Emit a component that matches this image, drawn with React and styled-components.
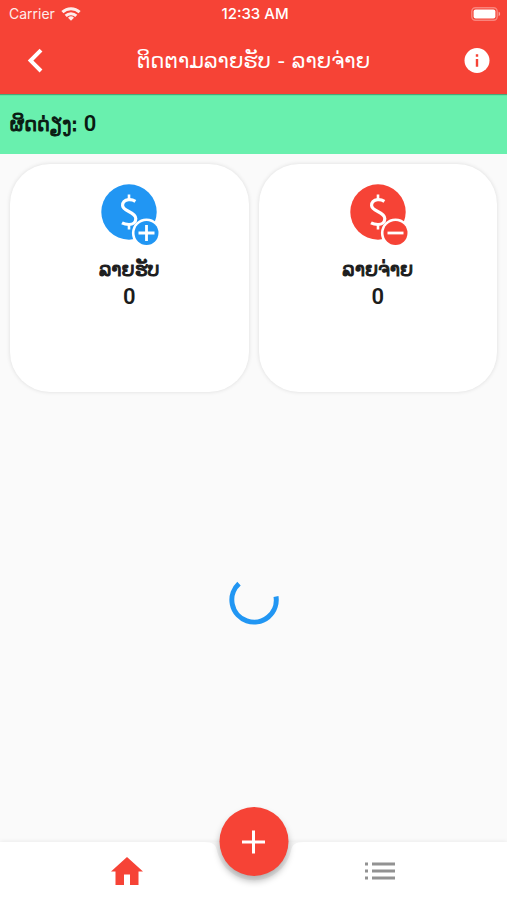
import React from 'react';
import styled, { createGlobalStyle } from 'styled-components';

const RED = '#f64336';
const BLUE = '#2196f3';

const cards = [
  { id: 'income', label: 'ລາຍຮັບ', amount: 0, color: BLUE, sign: 'plus' },
  { id: 'expense', label: 'ລາຍຈ່າຍ', amount: 0, color: RED, sign: 'minus' },
];

const WifiIcon = () => (
  <svg width="20" height="14" viewBox="0 0 20 14" aria-hidden="true">
    <g fill="none" stroke="#fff" strokeWidth="3">
      <path d="M1.4 5.2a12.4 12.4 0 0 1 17.2 0" />
      <path d="M4.7 8.8a7.6 7.6 0 0 1 10.6 0" />
    </g>
    <path fill="#fff" d="M10 13.8 7 10.8a4.3 4.3 0 0 1 6 0z" />
  </svg>
);

const BatteryIcon = () => (
  <svg width="30" height="14" viewBox="0 0 30 14" aria-hidden="true">
    <rect x="0.8" y="0.8" width="25.4" height="12.4" rx="3.6" fill="none" stroke="#fff" strokeOpacity="0.35" strokeWidth="1.4" />
    <rect x="2.6" y="2.6" width="21.8" height="8.8" rx="2" fill="#fff" />
    <path d="M27.6 4.8c2 .6 2 3.8 0 4.4z" fill="#fff" fillOpacity="0.5" />
  </svg>
);

const BackIcon = () => (
  <svg width="16" height="26" viewBox="0 0 16 26" aria-hidden="true">
    <path d="M14 2.2 3.6 12.6 14 23" fill="none" stroke="#fff" strokeWidth="4" />
  </svg>
);

const InfoIcon = () => (
  <svg width="26" height="26" viewBox="0 0 26 26" aria-hidden="true">
    <circle cx="13" cy="12.5" r="12.5" fill="#fff" />
    <path d="M11.8 6.3h2.4v2.4h-2.4zM11.8 11.1h2.4v7.6h-2.4z" fill={RED} />
  </svg>
);

const MoneyIcon = ({ color, sign }) => (
  <MoneySvg viewBox="0 0 56 62" aria-hidden="true">
    <circle cx="28" cy="28" r="27.7" fill={color} />
    <g fill="none" stroke="#fff" strokeWidth="3.2">
      <path d="M34.4 17.4c-2.2-1.4-4.6-1.9-6.8-1.7-4.1.4-6.3 3-6 6 .3 3 2.8 4.2 6.2 5.8 4 1.9 7 3.6 7 7.2 0 3.8-3.2 5.8-6.8 5.8-2.6 0-5-.5-7-1.6" />
      <path d="M28 10.6v5.6M28 40v5.6" strokeWidth="2.6" />
    </g>
    <circle cx="45.5" cy="49" r="14.6" fill="#fff" />
    <circle cx="45.5" cy="49" r="12" fill={color} />
    <path d={sign === 'plus' ? 'M37.5 49h16M45.5 41v16' : 'M37.5 49h16'} stroke="#fff" strokeWidth="2.8" />
  </MoneySvg>
);

const Spinner = () => (
  <svg width="50" height="50" viewBox="0 0 50 50" aria-hidden="true">
    <path d="M10 8.6A22.2 22.2 0 1 0 47 21.5" fill="none" stroke={BLUE} strokeWidth="5" />
  </svg>
);

const HomeIcon = () => (
  <svg width="32" height="28" viewBox="0 0 32 28" aria-hidden="true">
    <path d="M16 0 0 14.5h4.5V28H13V17.5h6V28h8.5V14.5H32z" fill={RED} />
  </svg>
);

const ListIcon = () => (
  <svg width="30" height="18" viewBox="0 0 30 18" aria-hidden="true">
    <path d="M0 .5h3v3H0zM0 7.5h3v3H0zM0 14.5h3v3H0zM7 .5h23v3H7zM7 7.5h23v3H7zM7 14.5h23v3H7z" fill="#929292" />
  </svg>
);

const PlusIcon = () => (
  <svg width="24" height="24" viewBox="0 0 24 24" aria-hidden="true">
    <path d="M.5 12h23M12 .5v23" stroke="#fff" strokeWidth="3" />
  </svg>
);

const App = () => (
  <>
    <GlobalStyle />
    <Screen>
      <Header>
        <StatusBar>
          <Carrier>
            Carrier <WifiIcon />
          </Carrier>
          <Clock>12:33 AM</Clock>
          <Battery>
            <BatteryIcon />
          </Battery>
        </StatusBar>
        <TitleBar>
          <IconButton type="button" aria-label="Back">
            <BackIcon />
          </IconButton>
          <Title>ຕິດຕາມລາຍຮັບ - ລາຍຈ່າຍ</Title>
          <IconButton type="button" aria-label="Info">
            <InfoIcon />
          </IconButton>
        </TitleBar>
      </Header>
      <Balance>
        <Label>ຜິດດ່ຽງ:</Label> <Amount>0</Amount>
      </Balance>
      <Content>
        <Cards>
          {cards.map((card) => (
            <Card key={card.id}>
              <MoneyIcon color={card.color} sign={card.sign} />
              <CardText>
                <Label>{card.label}</Label>
                <Amount>{card.amount}</Amount>
              </CardText>
            </Card>
          ))}
        </Cards>
        <Loading role="status" aria-label="Loading">
          <Spinner />
        </Loading>
      </Content>
      <BottomNav>
        <Notch viewBox="0 0 112 48" aria-hidden="true">
          <path d="M0 0h6c9 0 12 3 13 9a38 38 0 0 0 74 0c1-6 4-9 13-9h6v-2H0z" fill="#f4f4f4" />
        </Notch>
        <NavButton type="button" aria-label="Home">
          <HomeIcon />
        </NavButton>
        <NavButton type="button" aria-label="List">
          <ListIcon />
        </NavButton>
        <AddButton type="button" aria-label="Add">
          <PlusIcon />
        </AddButton>
      </BottomNav>
    </Screen>
  </>
);

const GlobalStyle = createGlobalStyle`
  * {
    box-sizing: border-box;
  }

  body {
    margin: 0;
    background: #fafafa;
    color: #1c1c1c;
    font-family: Roboto, "DejaVu Sans", sans-serif;
  }

  button {
    padding: 0;
    border: 0;
    background: none;
    cursor: pointer;
  }

  svg {
    display: block;
  }
`;

const Screen = styled.div`
  display: flex;
  flex-direction: column;
  min-height: 100vh;
`;

const Header = styled.header`
  position: relative;
  background: ${RED};
  color: white;
  box-shadow: 0 1px 1px rgba(0, 0, 0, 0.3);
`;

const StatusBar = styled.div`
  display: grid;
  grid-template-columns: 1fr auto 1fr;
  align-items: center;
  height: 27px;
  padding: 0 6px 0 9px;
  font-family: Inter, sans-serif;
  font-size: 14px;
`;

const Carrier = styled.div`
  display: flex;
  align-items: center;
  gap: 6px;
  opacity: 0.9;
`;

const Clock = styled.div`
  font-size: 15px;
  font-weight: 500;
`;

const Battery = styled.div`
  justify-self: end;
`;

const TitleBar = styled.div`
  display: grid;
  grid-template-columns: 60px 1fr 60px;
  align-items: center;
  height: 67px;
`;

const IconButton = styled.button`
  display: flex;
  align-items: center;
  justify-content: center;
  height: 60px;
  padding: 0 0 0 10px;

  &:last-child {
    padding: 0;
  }
`;

const Title = styled.h1`
  margin: 0;
  font-family: "DejaVu Sans", sans-serif;
  font-size: 21px;
  font-weight: 400;
  line-height: 32px;
  text-align: center;
  white-space: nowrap;
`;

/* the bold Lao face is far too wide, so the regular one is thickened */
const Label = styled.span`
  font-family: "DejaVu Sans", sans-serif;
  font-size: 19px;
  font-weight: 400;
  line-height: 28px;
  -webkit-text-stroke: 1px currentColor;
`;

const Amount = styled.span`
  font-size: 22px;
  font-weight: 600;
  line-height: 28px;
`;

const Balance = styled.div`
  display: flex;
  align-items: center;
  gap: 6px;
  height: 60px;
  padding: 0 10px;
  background: #69f0ae;
  color: #0a1a12;
`;

const Content = styled.main`
  display: flex;
  flex: 1;
  flex-direction: column;
  padding: 10px 10px 34px;
`;

const Cards = styled.div`
  display: grid;
  grid-template-columns: 1fr 1fr;
  gap: 10px;
`;

const Card = styled.section`
  display: flex;
  flex-direction: column;
  align-items: center;
  gap: 9px;
  min-height: 228px;
  padding: 20px 10px;
  border-radius: 40px;
  background: white;
  box-shadow: 0 0 4px rgba(0, 0, 0, 0.12);
`;

const CardText = styled.div`
  display: flex;
  flex-direction: column;
  align-items: center;
`;

const MoneySvg = styled.svg`
  width: 56px;
  height: 62px;
  overflow: visible;
`;

const Loading = styled.div`
  display: flex;
  flex: 1;
  align-items: center;
  justify-content: center;
`;

const BottomNav = styled.nav`
  position: relative;
  display: grid;
  grid-template-columns: 1fr 1fr;
  height: 58px;
  background: white;
  box-shadow: 0 -1px 4px rgba(0, 0, 0, 0.06);
`;

const Notch = styled.svg`
  position: absolute;
  top: 0;
  left: 50%;
  width: 112px;
  height: 48px;
  transform: translateX(-50%);
`;

const NavButton = styled.button`
  display: flex;
  align-items: center;
  justify-content: center;
`;

const AddButton = styled.button`
  position: absolute;
  top: -35px;
  left: 50%;
  display: flex;
  align-items: center;
  justify-content: center;
  width: 69px;
  height: 69px;
  border-radius: 50%;
  background: ${RED};
  box-shadow: 0 5px 7px rgba(0, 0, 0, 0.28);
  transform: translateX(-50%);
`;

export default App;
